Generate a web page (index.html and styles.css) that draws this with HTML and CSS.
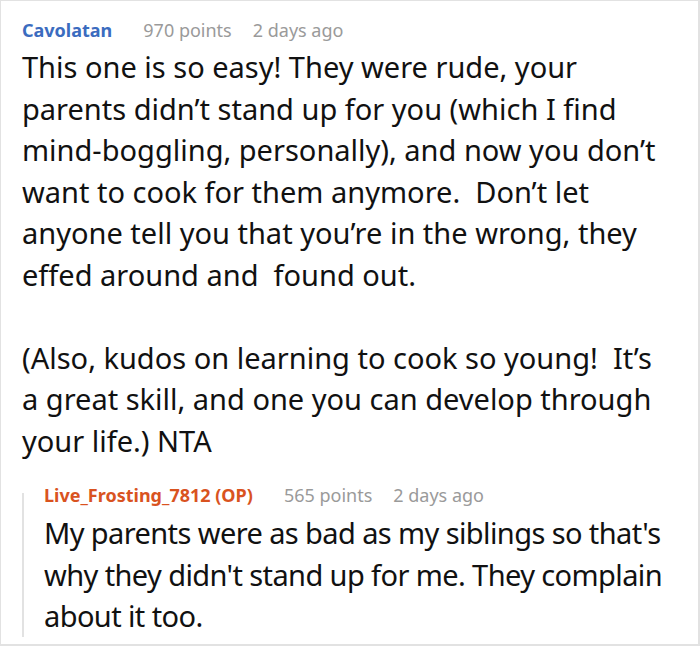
FILE: index.html
```html
<!DOCTYPE html>
<html>
<head>
<meta charset="utf-8">
<link rel="stylesheet" href="styles.css">
</head>
<body>
<div class="thread">
  <div class="comment">
    <div class="meta">
      <span class="user">Cavolatan</span>
      <span class="info">970 points</span>
      <span class="info">2 days ago</span>
    </div>
    <div class="text">
      <p>This one is so easy! They were rude, your parents didn’t stand up for you (which I find mind-boggling, personally), and now you don’t want to cook for them anymore.&nbsp; Don’t let anyone tell you that you’re in the wrong, they effed around and&nbsp; found out.</p>
      <p>(Also, kudos on learning to cook so young!&nbsp; It’s a great skill, and one you can develop through your life.) NTA</p>
    </div>
    <div class="reply">
      <div class="meta">
        <span class="user op">Live_Frosting_7812 (OP)</span>
        <span class="info">565 points</span>
        <span class="info">2 days ago</span>
      </div>
      <div class="text reply-text">
        <p>My parents were as bad as my siblings so that's why they didn't stand up for me. They complain about it too.</p>
      </div>
    </div>
  </div>
</div>
</body>
</html>
```
FILE: styles.css
```css
html, body {
  margin: 0;
  padding: 0;
  background: #fff;
}
.thread {
  width: 700px;
  height: 646px;
  box-sizing: border-box;
  border: 1px solid #e2e2e2;
  border-right-width: 2px;
  border-bottom-width: 2px;
  overflow: hidden;
  font-family: "Noto Sans", "Open Sans", sans-serif;
  color: #111;
}
.comment {
  padding: 17px 28px 0 21px;
}
.meta {
  display: flex;
  align-items: baseline;
  gap: 21px;
  font-size: 18px;
  line-height: 24px;
}
.user {
  font-weight: 700;
  color: #3b6cbf;
  margin-right: 10px;
}
.user.op {
  color: #d9531f;
}
.info {
  color: #9a9a9a;
}
.text {
  font-size: 29px;
  line-height: 41.5px;
  margin-top: 4px;
}
.text p {
  margin: 0 0 41.5px;
}
.text p:last-child {
  margin-bottom: 0;
}
.reply {
  margin-top: 32px;
  border-left: 2px solid #e2e2e2;
  padding-left: 20px;
}
.reply .meta {
  line-height: 4px;
}
.reply-text {
  margin-top: 15px;
  letter-spacing: -0.6px;
}
```
